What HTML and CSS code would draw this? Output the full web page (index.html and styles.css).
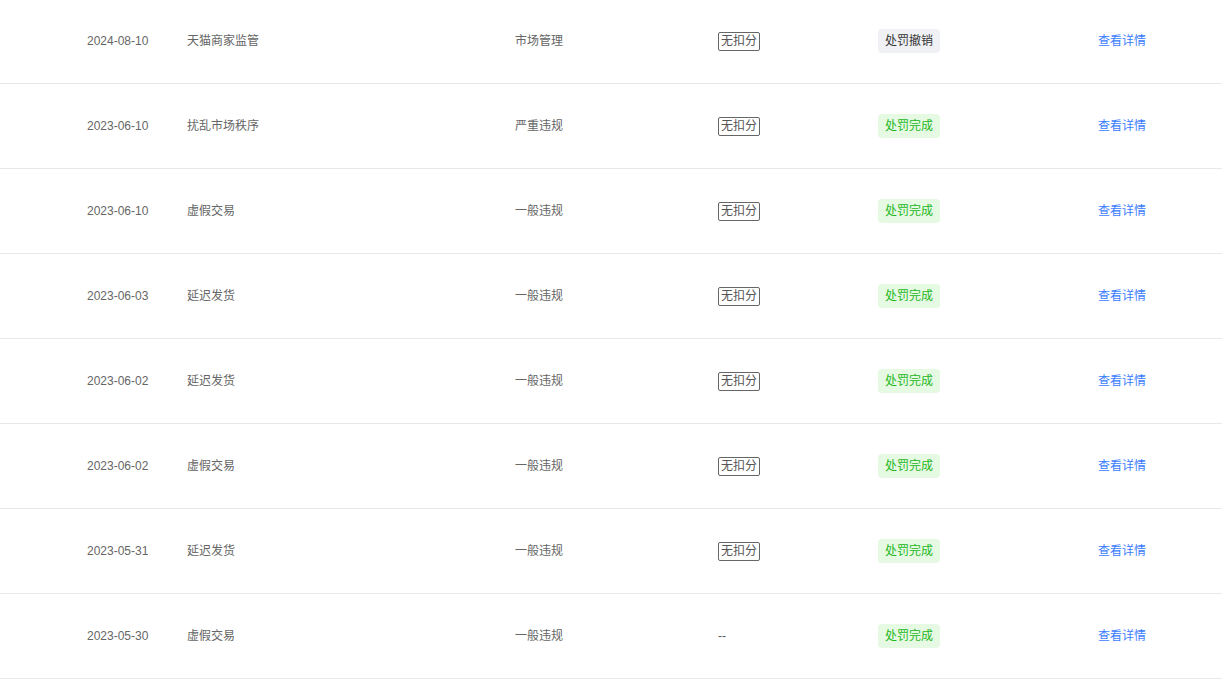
FILE: index.html
```html
<!DOCTYPE html>
<html lang="zh">
<head>
<meta charset="utf-8">
<link rel="stylesheet" href="styles.css">
</head>
<body>
<div class="list">
  <div class="row">
    <div class="c-date">2024-08-10</div>
    <div class="c-name">天猫商家监管</div>
    <div class="c-type">市场管理</div>
    <div class="c-score"><span class="score">无扣分</span></div>
    <div class="c-status"><span class="status gray">处罚撤销</span></div>
    <div class="c-op"><a class="link">查看详情</a></div>
  </div>
  <div class="row">
    <div class="c-date">2023-06-10</div>
    <div class="c-name">扰乱市场秩序</div>
    <div class="c-type">严重违规</div>
    <div class="c-score"><span class="score">无扣分</span></div>
    <div class="c-status"><span class="status green">处罚完成</span></div>
    <div class="c-op"><a class="link">查看详情</a></div>
  </div>
  <div class="row">
    <div class="c-date">2023-06-10</div>
    <div class="c-name">虚假交易</div>
    <div class="c-type">一般违规</div>
    <div class="c-score"><span class="score">无扣分</span></div>
    <div class="c-status"><span class="status green">处罚完成</span></div>
    <div class="c-op"><a class="link">查看详情</a></div>
  </div>
  <div class="row">
    <div class="c-date">2023-06-03</div>
    <div class="c-name">延迟发货</div>
    <div class="c-type">一般违规</div>
    <div class="c-score"><span class="score">无扣分</span></div>
    <div class="c-status"><span class="status green">处罚完成</span></div>
    <div class="c-op"><a class="link">查看详情</a></div>
  </div>
  <div class="row">
    <div class="c-date">2023-06-02</div>
    <div class="c-name">延迟发货</div>
    <div class="c-type">一般违规</div>
    <div class="c-score"><span class="score">无扣分</span></div>
    <div class="c-status"><span class="status green">处罚完成</span></div>
    <div class="c-op"><a class="link">查看详情</a></div>
  </div>
  <div class="row">
    <div class="c-date">2023-06-02</div>
    <div class="c-name">虚假交易</div>
    <div class="c-type">一般违规</div>
    <div class="c-score"><span class="score">无扣分</span></div>
    <div class="c-status"><span class="status green">处罚完成</span></div>
    <div class="c-op"><a class="link">查看详情</a></div>
  </div>
  <div class="row">
    <div class="c-date">2023-05-31</div>
    <div class="c-name">延迟发货</div>
    <div class="c-type">一般违规</div>
    <div class="c-score"><span class="score">无扣分</span></div>
    <div class="c-status"><span class="status green">处罚完成</span></div>
    <div class="c-op"><a class="link">查看详情</a></div>
  </div>
  <div class="row">
    <div class="c-date">2023-05-30</div>
    <div class="c-name">虚假交易</div>
    <div class="c-type">一般违规</div>
    <div class="c-score"><span class="dash">--</span></div>
    <div class="c-status"><span class="status green">处罚完成</span></div>
    <div class="c-op"><a class="link">查看详情</a></div>
  </div>
</div>
</body>
</html>
```

FILE: styles.css
```css
html, body {
  margin: 0;
  padding: 0;
  background: #fff;
}
body {
  font-family: "Liberation Sans", Arial, "Noto Sans CJK SC", sans-serif;
  font-size: 12px;
  color: #666;
}
.list {
  margin-top: -1px;
}
.row {
  display: flex;
  align-items: center;
  height: 84px;
  border-bottom: 1px solid #e8e8e8;
  line-height: 17px;
}
.c-date {
  width: 100px;
  padding-left: 87px;
}
.c-name {
  width: 328px;
}
.c-type {
  width: 203px;
}
.c-score {
  width: 160px;
}
.c-status {
  width: 220px;
}
.c-op {
  flex: 1;
}
.score {
  display: inline-block;
  border: 1px solid #666;
  border-radius: 2px;
  padding: 0 2px;
  color: #555;
  line-height: 17px;
}
.dash {
  color: #555;
}
.status {
  display: inline-block;
  padding: 0 7px;
  height: 24px;
  line-height: 24px;
  border-radius: 4px;
}
.status.gray {
  background: #f0f1f5;
  color: #333;
}
.status.green {
  background: #e6f9e3;
  color: #22b722;
}
.link {
  color: #3b7cff;
  cursor: pointer;
}
```
